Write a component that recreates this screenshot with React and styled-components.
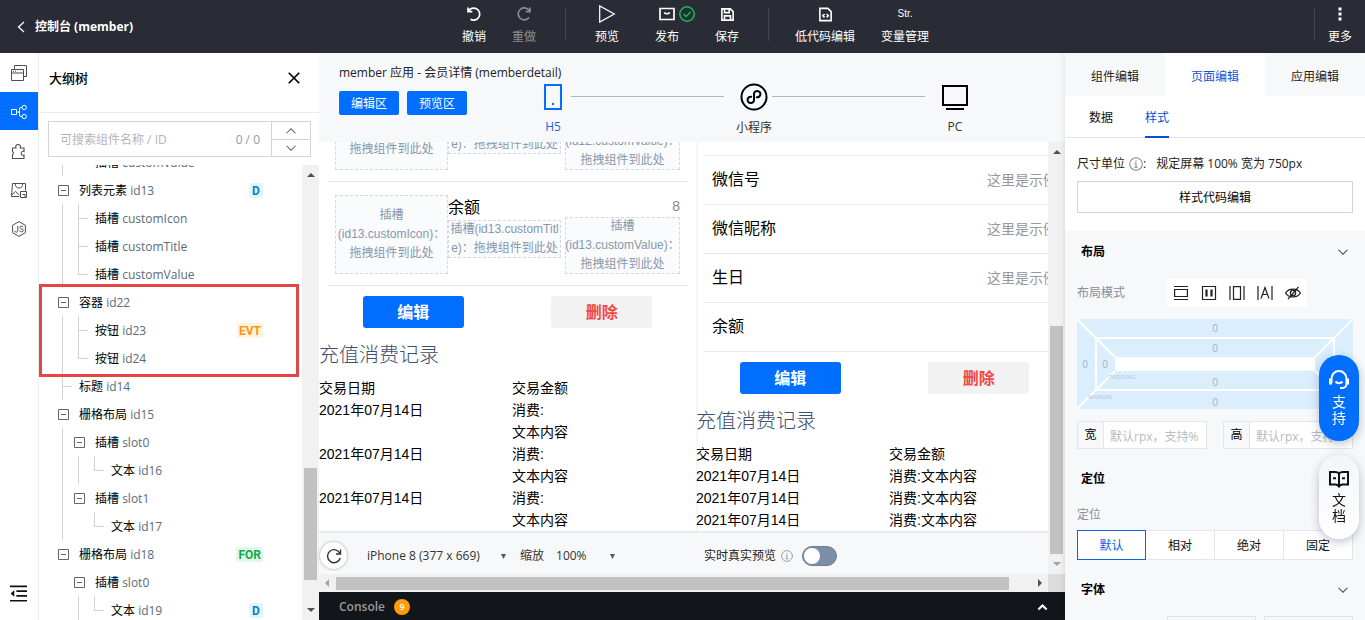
import React from "react";
import styled, { createGlobalStyle, css } from "styled-components";

const GlobalStyle = createGlobalStyle`
  * {
    box-sizing: border-box;
  }

  body {
    margin: 0;
    color: #000;
    font-family: "Open Sans", "Noto Sans CJK SC", sans-serif;
    font-size: 12px;
    line-height: 20px;
    overflow: hidden;
  }

  button, input, select {
    margin: 0;
    padding: 0;
    border: 0;
    border-radius: 0;
    background: none;
    color: inherit;
    font: inherit;
  }

  ul {
    margin: 0;
    padding: 0;
    list-style: none;
  }

  svg {
    display: block;
    flex: none;
  }
`;

const Page = styled.div`
  height: 100vh;
  display: flex;
  flex-direction: column;
`;

const Body = styled.div`
  flex: 1;
  min-height: 0;
  display: flex;
`;

/* ---------- top bar ---------- */

const TopBar = styled.header`
  flex: none;
  height: 53px;
  padding-left: 29px;
  display: grid;
  grid-template-columns: 1fr auto 1fr;
  background: #292c34;
  color: #fff;
`;

const BackLink = styled.a`
  display: flex;
  align-items: center;
  gap: 10px;
  margin-left: -12px;
  color: #fff;
  font-weight: 700;
  text-decoration: none;
`;

const Tools = styled.nav`
  display: flex;
`;

const ToolGroup = styled.div`
  display: flex;
  padding: 0 ${(p) => (p.$wide ? 0 : 5)}px;
`;

const Divider = styled.span`
  width: 1px;
  height: 33px;
  margin: 8px ${(p) => (p.$end ? 0 : 11)}px 0;
  background: #41454d;
`;

const Tool = styled.button`
  position: relative;
  width: ${(p) => p.$width}px;
  height: 47px;
  padding-top: 4px;
  display: flex;
  flex-direction: column;
  align-items: center;
  gap: 3px;
  color: #fff;
  opacity: ${(p) => (p.disabled ? 0.45 : 1)};
`;

const ToolIcon = styled.span`
  height: 20px;
  display: flex;
  align-items: center;
  font-family: "Liberation Sans", sans-serif;
  font-size: 10px;
`;

const Published = styled.svg`
  position: absolute;
  top: 6px;
  left: 42px;
`;

const TopEnd = styled.div`
  display: flex;
  justify-content: flex-end;
`;

/* ---------- icon rail ---------- */

const Rail = styled.nav`
  flex: none;
  width: 39px;
  padding-bottom: 8px;
  display: flex;
  flex-direction: column;
  gap: 1px;
  border-right: 1px solid #ebedf0;
  background: #fff;
`;

const RailButton = styled.button`
  width: 38px;
  height: 38px;
  padding: 1px 1px 0 0;
  display: grid;
  place-items: center;
  background: ${(p) => (p.$active ? "#006eff" : "#fff")};
  color: ${(p) => (p.$active ? "#fff" : "#4b4f55")};

  &:last-child {
    margin-top: auto;
    color: #111;
  }
`;

/* ---------- outline tree ---------- */

const Outline = styled.aside`
  flex: none;
  width: 280px;
  display: flex;
  flex-direction: column;
  background: #fff;
`;

const OutlineHead = styled.div`
  flex: none;
  height: 60px;
  padding: 0 18px 10px 10px;
  display: flex;
  align-items: center;
  justify-content: space-between;
  border-bottom: 1px solid #e8eaed;

  h2 {
    margin: 0;
    font-size: 13px;
    font-weight: 500;
  }
`;

const Search = styled.div`
  flex: none;
  height: 36px;
  margin: 8px 8px 8px 9px;
  display: flex;
  border: 1px solid #cfd5de;
  color: #999;
`;

const SearchInput = styled.input`
  flex: 1;
  min-width: 0;
  padding: 2px 0 0 11px;

  &::placeholder {
    color: #b5b5b5;
  }
`;

const Count = styled.span`
  padding: 8px 11px 0;
`;

const Stepper = styled.div`
  width: 39px;
  display: grid;
  grid-template-rows: 1fr 1fr;
  border-left: 1px solid #cfd5de;
  color: #4f5b66;

  button {
    display: grid;
    place-items: center;
  }

  button + button {
    border-top: 1px solid #cfd5de;
  }
`;

const TreeArea = styled.div`
  flex: 1;
  min-height: 0;
  display: flex;
`;

const TreeView = styled.div`
  flex: 1;
  overflow: hidden;

  > ul {
    margin-top: -17px;
  }
`;

const TreeGroup = styled.li`
  position: relative;

  ${(p) =>
    p.$marked &&
    css`
      z-index: 1;

      &::after {
        content: "";
        position: absolute;
        inset: -4px 3px -5px 0;
        border: 3px solid #e54545;
      }
    `}
`;

const TreeRow = styled.div`
  height: 28px;
  padding: 0 39px 0 15px;
  display: flex;
  align-items: center;
  white-space: nowrap;
`;

const Guide = styled.span`
  position: relative;
  flex: none;
  align-self: stretch;
  width: 16px;

  &::before {
    content: "";
    position: absolute;
    left: 8px;
    top: 0;
    height: ${(p) => (p.$kind === "last" ? "50%" : "100%")};
    border-left: ${(p) => (p.$kind === "gap" ? "0" : "1px solid #cfd3d8")};
  }

  &::after {
    content: "";
    position: absolute;
    left: 8px;
    top: 50%;
    width: 10px;
    border-top: ${(p) =>
      p.$kind === "last" || p.$kind === "leaf" ? "1px solid #cfd3d8" : "0"};
  }
`;

const Toggle = styled.button`
  width: 16px;
  height: 16px;
  padding: 1px 0 0 3px;
  display: grid;
  place-items: center;
  color: #666;
`;

const NodeName = styled.span`
  flex: 1;
  margin-left: 9px;
  padding-top: 2px;

  span {
    color: #5b6b78;
  }
`;

const tagColors = {
  D: ["#0a7fc2", "#e0f5fd"],
  EVT: ["#ff9416", "#fff3dc"],
  FOR: ["#14a94b", "#e3f8ea"],
};

const Tag = styled.span`
  min-width: 14px;
  padding: 1px 2px 0;
  border-radius: 2px;
  font-family: Roboto, sans-serif;
  font-weight: 700;
  line-height: 14px;
  text-align: center;
  color: ${(p) => tagColors[p.$type][0]};
  background: ${(p) => tagColors[p.$type][1]};
`;

/* ---------- scroll bars ---------- */

const ScrollTrack = styled.div`
  flex: none;
  display: flex;
  flex-direction: ${(p) => (p.$horizontal ? "row" : "column")};
  align-items: center;
  background: #f1f1f1;
  ${(p) => (p.$horizontal ? "height: 18px;" : "width: 17px;")}

  svg {
    margin: ${(p) => (p.$horizontal ? "0 4px" : "6px 0")};
  }
`;

const ScrollSpace = styled.span`
  flex: ${(p) => p.$share} 0 0;
`;

const ScrollThumb = styled.span`
  flex: ${(p) => p.$share} 0 0;
  ${(p) => (p.$horizontal ? "height: 13px;" : "width: 13px;")}
  background: #c1c1c1;
`;

/* ---------- workspace ---------- */

const Workspace = styled.main`
  flex: 1;
  min-width: 0;
  display: flex;
  flex-direction: column;
  background: #f7f8fa;
`;

const WorkHead = styled.div`
  flex: none;
  height: 89px;
  padding: 10px 92px 0 20px;
`;

const AppTitle = styled.div`
  color: #222;
`;

const WorkRow = styled.div`
  display: flex;
`;

const SmallButton = styled.button`
  width: 60px;
  height: 24px;
  margin: 8px 8px 0 0;
  padding-top: 2px;
  border-radius: 2px;
  background: #006eff;
  color: #fff;
`;

const Steps = styled.div`
  flex: 1;
  margin-left: 60px;
  display: flex;
`;

const Step = styled.button`
  width: 36px;
  height: 54px;
  display: flex;
  flex-direction: column;
  align-items: center;
  gap: 7px;
  white-space: nowrap;
  color: ${(p) => (p.$active ? "#1a66e0" : "#333")};
`;

const StepLine = styled.span`
  flex: 1;
  height: 1px;
  margin: 13px 12px 0 0;
  background: #b3b7bc;
`;

const Stage = styled.div`
  flex: 1;
  min-height: 0;
  display: flex;
`;

const StageMain = styled.div`
  flex: 1;
  min-width: 0;
  display: flex;
  flex-direction: column;
`;

const Phones = styled.div`
  flex: 1;
  min-height: 0;
  display: flex;
  overflow: hidden;
  background: #fff;
  font-family: "Liberation Sans", "Noto Sans CJK SC", sans-serif;
`;

const Phone = styled.section`
  flex: none;
  width: 377px;
  display: flex;
  flex-direction: column;
  justify-content: flex-end;

  & + & {
    box-shadow: inset 2px 0 #f5f6f8;
  }
`;

const SlotRow = styled.div`
  flex: none;
  height: 104px;
  margin: 0 8px 0 9px;
  padding: 13px 8px 11px 7px;
  display: grid;
  grid-template-columns: 113px 113px 115px;
  column-gap: 0;
  border-bottom: 1px solid #e8eaec;

  > :last-child {
    margin: 0 -4px 0 4px;
  }
`;

const SlotColumn = styled.div`
  display: flex;
  flex-direction: column;
`;

const Slot = styled.div`
  flex: ${(p) => (p.$fill ? 1 : "none")};
  display: grid;
  place-content: center;
  outline: 1px dashed #d3d9e2;
  outline-offset: -1px;
  background: #fafbfd;
  color: #8797ab;
  line-height: 19px;
  text-align: center;
  white-space: nowrap;
`;

const SlotTitle = styled.div`
  height: 25px;
  font-size: 16px;
  line-height: 25px;
`;

const SlotValue = styled.div`
  height: 22px;
  font-size: 14px;
  line-height: 22px;
  text-align: right;
  color: #888;
`;

const List = styled.ul`
  flex: none;
  margin-left: 8px;
  border-top: 1px solid #e8eaec;
`;

const ListItem = styled.li`
  height: 49px;
  padding: 0 16px 0 8px;
  display: flex;
  align-items: center;
  justify-content: space-between;
  border-bottom: 1px solid #e8eaec;
  font-size: 16px;

  span {
    font-size: 14px;
    color: #999;
  }
`;

const Actions = styled.div`
  flex: none;
  padding-top: 10px;
  display: flex;
  justify-content: space-around;
`;

const ActionButton = styled.button`
  width: 101px;
  height: 32px;
  padding-top: 2px;
  border-radius: 3px;
  font-size: 16px;
  font-weight: 700;
  background: ${(p) => (p.$danger ? "#f2f2f2" : "#006eff")};
  color: ${(p) => (p.$danger ? "#f04848" : "#fff")};
`;

const RecordTitle = styled.h3`
  flex: none;
  margin: 13px 0 8px;
  font-size: 20px;
  font-weight: 300;
  line-height: 28px;
  color: #3d506b;
`;

const Records = styled.table`
  flex: none;
  border-collapse: collapse;
  font-size: 14px;
  line-height: 22px;
  text-align: left;

  th,
  td {
    padding: 0;
    font-weight: 400;
    vertical-align: top;
  }

  th:first-child {
    width: 193px;
  }
`;

const DeviceBar = styled.div`
  flex: none;
  height: 43px;
  padding: 4px 0 0 1px;
  display: flex;
  align-items: center;
  border-top: 2px solid #e9ebee;
  color: #333;
`;

const Reload = styled.button`
  width: 27px;
  height: 27px;
  margin-right: 20px;
  display: grid;
  place-items: center;
  border-radius: 50%;
  background: #fff;
  box-shadow: 0 0 3px rgba(0, 0, 0, 0.35);
`;

const SelectBox = styled.span`
  width: ${(p) => p.$width}px;
  display: flex;
  align-items: center;

  select {
    flex: 1;
    min-width: 0;
    appearance: none;
    line-height: 20px;
  }
`;

const ZoomLabel = styled.label`
  margin: 0 12px 0 13px;
`;

const Live = styled.div`
  margin-left: 88px;
  display: flex;
  align-items: center;
  gap: 5px;
  color: #222;

  svg {
    color: #8a94a0;
  }
`;

const Switch = styled.input`
  appearance: none;
  width: 35px;
  height: 20px;
  margin-left: 4px;
  display: flex;
  border: 1px solid #6c7e96;
  border-radius: 10px;
  background: #7b8ea6;

  &::before {
    content: "";
    width: 16px;
    height: 16px;
    margin: 1px;
    border-radius: 50%;
    background: #fff;
  }
`;

const HScroll = styled.div`
  flex: none;
  display: flex;

  > div {
    flex: 1;
  }
`;

const Corner = styled.span`
  width: 17px;
  background: #dcdcdc;
`;

const Console = styled.div`
  flex: none;
  height: 28px;
  padding: 2px 17px 0 20px;
  display: flex;
  align-items: center;
  gap: 9px;
  background: #121519;
  color: #999;
  font-weight: 600;

  button {
    margin-left: auto;
    color: #fff;
  }
`;

const ConsoleCount = styled.span`
  width: 16px;
  height: 16px;
  border-radius: 50%;
  background: #ff9c0a;
  color: #fff;
  font-size: 9px;
  line-height: 16px;
  text-align: center;
`;

/* ---------- inspector ---------- */

const Inspector = styled.aside`
  position: relative;
  flex: none;
  width: 300px;
  display: flex;
  flex-direction: column;
  overflow: hidden;
  background: #f7f8fa;
  box-shadow: 0 0 6px rgba(0, 0, 0, 0.12);
`;

const MainTabs = styled.div`
  flex: none;
  display: grid;
  grid-template-columns: repeat(3, 1fr);
`;

const MainTab = styled.button`
  height: 43px;
  padding-top: 4px;
  background: ${(p) => (p.$active ? "#fff" : "#f7f8fa")};
  color: ${(p) => (p.$active ? "#1058d8" : "#222")};
`;

const SubTabs = styled.div`
  flex: none;
  height: 42px;
  padding-left: 24px;
  display: flex;
  gap: 32px;
  border-bottom: 1px solid #e4e6ea;
  background: #fff;
`;

const SubTab = styled.button`
  height: 42px;
  padding-top: 4px;
  border-bottom: 2px solid ${(p) => (p.$active ? "#0052d9" : "transparent")};
  color: ${(p) => (p.$active ? "#0052d9" : "#111")};
`;

const UnitBlock = styled.div`
  flex: none;
  padding: 16px 12px 18px;
  background: #fff;
  color: #222;
`;

const UnitLine = styled.div`
  margin-bottom: 7px;
  display: flex;
  align-items: center;

  svg {
    margin-left: 4px;
    color: #888;
  }

  span {
    margin-left: 10px;
  }
`;

const CodeButton = styled.button`
  width: 100%;
  height: 32px;
  padding-top: 2px;
  border: 1px solid #cfd5de;
  background: #fff;
  color: #000;
`;

const Section = styled.section`
  flex: none;
  padding: 0 12px 9px;
`;

const SectionHead = styled.div`
  height: 40px;
  padding: 2px 4px 0;
  display: flex;
  align-items: center;
  justify-content: space-between;
  font-weight: 700;

  svg {
    color: #333;
  }
`;

const ModeRow = styled.div`
  height: 28px;
  margin: 8px 0 12px;
  display: flex;
  align-items: center;
  color: #888f99;
`;

const Modes = styled.div`
  margin-left: 42px;
  display: flex;
  background: #fff;
  color: #222;

  button {
    width: 28px;
    height: 28px;
    display: grid;
    place-items: center;
  }
`;

const BoxModel = styled.svg`
  width: 100%;
  height: auto;
  font-size: 10px;
  text-anchor: middle;
`;

const SizeRow = styled.div`
  margin-top: 12px;
  display: grid;
  grid-template-columns: 1fr 1fr;
  gap: 16px;
`;

const SizeField = styled.label`
  min-width: 0;
  height: 28px;
  display: flex;
  align-items: center;
  border: 1px solid #e3e6eb;

  span {
    flex: none;
    width: 25px;
    text-align: center;
  }

  input {
    flex: 1;
    min-width: 0;
    height: 100%;
    padding: 2px 0 0 6px;
    border-left: 1px solid #e3e6eb;
    background: #fff;
  }

  input::placeholder {
    color: #b8bcc2;
  }
`;

const FieldLabel = styled.div`
  padding: 7px 0 5px;
  color: #888f99;
`;

const Positions = styled.div`
  display: grid;
  grid-template-columns: repeat(4, 1fr);
`;

const PositionButton = styled.button`
  height: 30px;
  padding-top: 2px;
  border: 1px solid ${(p) => (p.$active ? "#0f62e0" : "#e3e6eb")};
  border-left-width: ${(p) => (p.$active ? 1 : 0)}px;
  background: #fff;
  color: ${(p) => (p.$active ? "#0f62e0" : "#111")};
`;

const FontFields = styled.div`
  height: 28px;
  margin-top: 7px;
  padding-left: 90px;
  display: flex;
  gap: 8px;
`;

const FontField = styled.span`
  flex: 1;
  border: 1px solid #dfe3e8;
`;

/* ---------- floating buttons ---------- */

const Floating = styled.div`
  position: fixed;
  right: 6px;
  bottom: 81px;
  display: flex;
  flex-direction: column;
  gap: 14px;
`;

const FloatButton = styled.button`
  width: 40px;
  padding: 15px 0;
  display: flex;
  flex-direction: column;
  align-items: center;
  gap: 4px;
  border-radius: 20px;
  background: ${(p) =>
    p.$primary ? "#006eff" : "linear-gradient(#f4f5f7, #fff)"};
  color: ${(p) => (p.$primary ? "#fff" : "#111")};
  box-shadow: 0 3px 10px rgba(40, 60, 90, 0.3);
  font-size: 14px;
  line-height: 16px;

  span {
    width: 14px;
  }
`;

/* ---------- drawings ---------- */

const Icon = ({ size = 16, width = 1, children }) => (
  <svg
    width={size}
    height={size}
    viewBox="0 0 16 16"
    fill="none"
    stroke="currentColor"
    strokeWidth={width}
    aria-hidden="true"
  >
    {children}
  </svg>
);

const Chevron = ({ up, size = 12, width = 1.4 }) => (
  <Icon size={size} width={width}>
    <path d={up ? "M2 11l6-6 6 6" : "M2 5l6 6 6-6"} />
  </Icon>
);

const Arrow = ({ dir, faded, size = 8 }) => {
  const shapes = {
    up: "M0 6l4-4 4 4z",
    down: "M0 2l4 4 4-4z",
    left: "M6 0L2 4l4 4z",
    right: "M2 0l4 4-4 4z",
  };
  return (
    <svg width={size} height={size} viewBox="0 0 8 8" aria-hidden="true">
      <path d={shapes[dir]} fill={faded ? "#a3a3a3" : "#505050"} />
    </svg>
  );
};

const Caret = () => (
  <svg width="7" height="6" viewBox="0 0 7 6" aria-hidden="true">
    <path d="M1 1h5L3.500 6z" fill="#555" />
  </svg>
);

const Info = ({ size = 14 }) => (
  <Icon size={size} width={1.2}>
    <circle cx="8" cy="8" r="7.2" />
    <path d="M8 4v1.6M6.4 7.2H8v4.6M6.2 11.8h3.8" />
  </Icon>
);

const icons = {
  undo: (
    <Icon width={1.7}>
      <path d="M2 1.5v4.200h4.300M2.300 5.500A6 6 0 1 1 4.500 13.200" />
    </Icon>
  ),
  redo: (
    <Icon width={1.7}>
      <path d="M14 1.5v4.200H9.700M13.700 5.500A6 6 0 1 0 13 11.500" />
    </Icon>
  ),
  preview: (
    <Icon size={18} width={1.1}>
      <path d="M1.500 .8v14.400L14.500 8z" />
    </Icon>
  ),
  publish: (
    <Icon width={1.7}>
      <path d="M1 2.500h14v11H1zM5.300 6.300a2.900 2.300 0 0 0 5.400 0" />
    </Icon>
  ),
  save: (
    <Icon size={15} width={1.7}>
      <path d="M2 2h9l3 3v9H2zM4.800 2v4h5V2M4.800 14V9.500h6.400V14" />
    </Icon>
  ),
  code: (
    <Icon size={15} width={1.7}>
      <path d="M2 1.500h8.500L14 5v9.500H2zM7 7.500l-1.800 1.800L7 11.100M9.200 7.500L11 9.300l-1.800 1.800" />
    </Icon>
  ),
  more: (
    <svg width="4" height="14" viewBox="0 0 4 14" fill="#fff">
      <path d="M.5 .5h3v3h-3zM.5 5.500h3v3h-3zM.5 10.500h3v3h-3z" />
    </svg>
  ),
  pages: (
    <Icon>
      <path d="M.5 4.500h12v11H.5zM.5 8h12M2 6.300h1M4 6.300h1M3.500 4.500v-4h12v11h-3" />
    </Icon>
  ),
  tree: (
    <Icon>
      <path d="M.5 5.500h5v5h-5zM5.500 8h3M11 3.500H10A1.500 1.500 0 0 0 8.500 5v6a1.500 1.500 0 0 0 1.500 1.500h1" />
      <circle cx="13.200" cy="3.500" r="2.200" />
      <circle cx="13.200" cy="12.500" r="2.200" />
    </Icon>
  ),
  puzzle: (
    <Icon width={1.1}>
      <path d="M1.500 5H5a2.400 2.400 0 1 1 4.200 0H13v3.500a2 2 0 1 0 0 3.600v3.400H1.500v-3.800a1.900 1.900 0 0 0 0-3.200z" />
    </Icon>
  ),
  material: (
    <Icon>
      <path d="M14.500 8.500V1.500H1.500L.5 14.500H8M4.300 1.500a3.700 4.500 0 0 0 7.400 0M.8 13l3.700-3.500L8.500 13M9.500 9.500h6v6h-6zM11.500 12.500h2.500v3" />
    </Icon>
  ),
  js: (
    <Icon>
      <path d="M8 .6l6.400 3.700v7.400L8 15.400l-6.400-3.700V4.300zM6.800 5v4.600a1.500 1.500 0 0 1-3 .2M12.200 6.200C11.600 4.500 8.800 4.700 8.900 6.400c.1 1.900 3.400 1 3.400 2.900 0 2-3.200 2-3.600 .2" />
    </Icon>
  ),
  collapse: (
    <Icon size={17} width={1.6}>
      <path d="M0 1.200h16M6 5.800h10M6 10.200h10M0 14.800h16" />
      <path d="M4 5v6L.5 8z" fill="currentColor" stroke="none" />
    </Icon>
  ),
  phone: (
    <svg width="18" height="27" viewBox="0 0 18 27" fill="none">
      <path d="M1 2h16v24H1z" stroke="#006eff" strokeWidth="2" />
      <path d="M8 20h2v2H8z" fill="#006eff" />
    </svg>
  ),
  mini: (
    <svg width="28" height="28" viewBox="0 0 28 28" fill="none">
      <g stroke="#000" strokeWidth="2" strokeLinecap="round">
        <circle cx="14" cy="14" r="12.500" />
        <path d="M11.200 13.700a3.200 3.200 0 1 0 2.800 3.200v-5.800a3.200 3.200 0 1 1 2.800 3.200" />
      </g>
    </svg>
  ),
  pc: (
    <svg width="26" height="27" viewBox="0 0 26 27" fill="none">
      <path d="M1 3h24v19H1z" stroke="#000" strokeWidth="2" />
      <path d="M4 26h18" stroke="#000" strokeWidth="2" />
    </svg>
  ),
  block: (
    <Icon width={1.2}>
      <path d="M1 1.500h14M1 14.500h14M1.600 4.500h12.800v7H1.600z" />
    </Icon>
  ),
  flex: (
    <Icon width={1.2}>
      <path d="M1.500 1.500h13v13h-13z" />
      <path d="M5.500 4.500v7M10.500 4.500v7" strokeWidth="2.200" />
    </Icon>
  ),
  inlineBlock: (
    <Icon width={1.2}>
      <path d="M1 1v14M15 1v14M4.500 1.600h7v12.800h-7z" />
    </Icon>
  ),
  inline: (
    <Icon width={1.2}>
      <path d="M1 1v14M15 1v14M4 13.500L8 2.500l4 11M5.500 9.500h5" />
    </Icon>
  ),
  hidden: (
    <Icon width={1.3}>
      <path d="M.6 8C3.500 2.800 12.500 2.800 15.400 8 12.500 13.200 3.500 13.200 .6 8zM13.500 1.800L3 14.200" />
      <circle cx="8" cy="8" r="2.600" />
    </Icon>
  ),
  headset: (
    <svg width="20" height="20" viewBox="0 0 20 20" fill="none">
      <g stroke="currentColor" strokeWidth="2">
        <path d="M2.500 13V8.500a7.500 7.500 0 0 1 15 0V14a4 4 0 0 1-4 4H11" />
        <path d="M6.500 11.500c1.800 2.200 5.200 2.200 7 0" />
        <path d="M1.500 8.500v6M18.500 8.500v6" strokeWidth="3" />
      </g>
    </svg>
  ),
  book: (
    <svg width="20" height="18" viewBox="0 0 20 18" fill="none">
      <path
        d="M10 3.500C9 2 7.500 2 6 2H1v12.500h5.500c1.500 0 2.500 .5 3.500 2 1-1.500 2-2 3.500-2H19V2h-5c-1.500 0-3 0-4 1.500zM10 3.500v13M4 8.300h3M13 8.300h3"
        stroke="currentColor"
        strokeWidth="2"
      />
    </svg>
  ),
};

/* ---------- data ---------- */

const treeGroups = [
  {
    key: "before",
    rows: [{ name: "插槽", id: "customValue", guides: ["line", "last"] }],
  },
  {
    key: "id13",
    rows: [
      { name: "列表元素", id: "id13", guides: [], open: true, tag: "D" },
      { name: "插槽", id: "customIcon", guides: ["line", "leaf"] },
      { name: "插槽", id: "customTitle", guides: ["line", "leaf"] },
      { name: "插槽", id: "customValue", guides: ["line", "last"] },
    ],
  },
  {
    key: "id22",
    marked: true,
    rows: [
      { name: "容器", id: "id22", guides: [], open: true },
      { name: "按钮", id: "id23", guides: ["line", "leaf"], tag: "EVT" },
      { name: "按钮", id: "id24", guides: ["line", "last"] },
    ],
  },
  {
    key: "id14",
    rows: [{ name: "标题", id: "id14", guides: ["leaf"] }],
  },
  {
    key: "id15",
    rows: [
      { name: "栅格布局", id: "id15", guides: [], open: true },
      { name: "插槽", id: "slot0", guides: ["line"], open: true },
      { name: "文本", id: "id16", guides: ["line", "line", "last"] },
      { name: "插槽", id: "slot1", guides: ["line"], open: true },
      { name: "文本", id: "id17", guides: ["line", "gap", "last"] },
    ],
  },
  {
    key: "id18",
    rows: [
      { name: "栅格布局", id: "id18", guides: [], open: true, tag: "FOR" },
      { name: "插槽", id: "slot0", guides: ["gap"], open: true },
      { name: "文本", id: "id19", guides: ["gap", "line", "last"], tag: "D" },
    ],
  },
];

const listItems = [
  ["微信号", "这里是示例"],
  ["微信昵称", "这里是示例"],
  ["生日", "这里是示例"],
  ["余额", ""],
];

const margins = [
  [138, 13],
  [138, 33],
  [8, 49],
  [28, 49],
  [138, 67],
  [138, 87],
];

/* ---------- parts ---------- */

const ScrollBar = ({ horizontal, before, thumb, after, fadeStart, fadeEnd }) => (
  <ScrollTrack $horizontal={horizontal} aria-hidden="true">
    <Arrow dir={horizontal ? "left" : "up"} faded={fadeStart} />
    <ScrollSpace $share={before} />
    <ScrollThumb $share={thumb} $horizontal={horizontal} />
    <ScrollSpace $share={after} />
    <Arrow dir={horizontal ? "right" : "down"} faded={fadeEnd} />
  </ScrollTrack>
);

const ToolItem = ({ icon, label, width, disabled, children }) => (
  <Tool $width={width} disabled={disabled}>
    <ToolIcon>{icon}</ToolIcon>
    {label}
    {children}
  </Tool>
);

const Header = () => (
  <TopBar>
    <BackLink href="#">
      <svg width="8" height="12" viewBox="0 0 8 12" fill="none">
        <path d="M7 1L1.500 6 7 11" stroke="#fff" strokeWidth="1.300" />
      </svg>
      控制台 (member)
    </BackLink>
    <Tools>
      <ToolGroup>
        <ToolItem icon={icons.undo} label="撤销" width={50} />
        <ToolItem icon={icons.redo} label="重做" width={50} disabled />
      </ToolGroup>
      <Divider />
      <ToolGroup $wide>
        <ToolItem icon={icons.preview} label="预览" width={60} />
        <ToolItem icon={icons.publish} label="发布" width={60}>
          <Published width="16" height="16" viewBox="0 0 16 16" fill="none">
            <g stroke="#0abf5b" strokeWidth="1.500">
              <circle cx="8" cy="8" r="7.200" />
              <path d="M4.500 8l2.500 2.500L11.500 6" />
            </g>
          </Published>
        </ToolItem>
        <ToolItem icon={icons.save} label="保存" width={60} />
      </ToolGroup>
      <Divider />
      <ToolGroup>
        <ToolItem icon={icons.code} label="低代码编辑" width={80} />
        <ToolItem icon="Str." label="变量管理" width={80} />
      </ToolGroup>
    </Tools>
    <TopEnd>
      <Divider $end />
      <ToolItem icon={icons.more} label="更多" width={50} />
    </TopEnd>
  </TopBar>
);

const Tree = () => (
  <Outline>
    <OutlineHead>
      <h2>大纲树</h2>
      <button aria-label="关闭">
        <Icon size={14} width={2}>
          <path d="M2 2l12 12M14 2L2 14" />
        </Icon>
      </button>
    </OutlineHead>
    <Search>
      <SearchInput
        type="text"
        aria-label="可搜索组件名称 / ID"
        placeholder="可搜索组件名称 / ID"
      />
      <Count>0 / 0</Count>
      <Stepper>
        <button aria-label="上一个">
          <Chevron up size={12} />
        </button>
        <button aria-label="下一个">
          <Chevron size={12} />
        </button>
      </Stepper>
    </Search>
    <TreeArea>
      <TreeView>
        <ul>
          {treeGroups.map((group) => (
            <TreeGroup key={group.key} $marked={group.marked}>
              {group.rows.map((row) => (
                <TreeRow key={row.id}>
                  {row.guides.map((kind, i) => (
                    <Guide key={i} $kind={kind} />
                  ))}
                  {row.open && (
                    <Toggle aria-label={row.id}>
                      <svg width="11" height="11" viewBox="0 0 11 11" fill="none">
                        <path d="M.5 .5h10v10H.5zM3 5.500h5" stroke="currentColor" />
                      </svg>
                    </Toggle>
                  )}
                  <NodeName>
                    {row.name} <span>{row.id}</span>
                  </NodeName>
                  {row.tag && <Tag $type={row.tag}>{row.tag}</Tag>}
                </TreeRow>
              ))}
            </TreeGroup>
          ))}
        </ul>
      </TreeView>
      <ScrollBar before={283} thumb={112} after={20} />
    </TreeArea>
  </Outline>
);

const SlotCell = ({ id, title, value }) => (
  <SlotRow>
    <Slot $fill>
      插槽
      <br />({id}.customIcon)：
      <br />
      拖拽组件到此处
    </Slot>
    <SlotColumn>
      <SlotTitle>{title}</SlotTitle>
      <Slot>
        插槽({id}.customTitl
        <br />
        e)：拖拽组件到此处
      </Slot>
    </SlotColumn>
    <SlotColumn>
      <SlotValue>{value}</SlotValue>
      <Slot>
        插槽
        <br />({id}.customValue)：
        <br />
        拖拽组件到此处
      </Slot>
    </SlotColumn>
  </SlotRow>
);

const PhoneBottom = ({ stacked }) => (
  <>
    <Actions>
      <ActionButton>编辑</ActionButton>
      <ActionButton $danger>删除</ActionButton>
    </Actions>
    <RecordTitle>充值消费记录</RecordTitle>
    <Records>
      <thead>
        <tr>
          <th>交易日期</th>
          <th>交易金额</th>
        </tr>
      </thead>
      <tbody>
        {[1, 2, 3].map((n) => (
          <tr key={n}>
            <td>2021年07月14日</td>
            <td>
              消费:
              {stacked && <br />}
              文本内容
            </td>
          </tr>
        ))}
      </tbody>
    </Records>
  </>
);

const Center = () => (
  <Workspace>
    <WorkHead>
      <AppTitle>member 应用 - 会员详情 (memberdetail)</AppTitle>
      <WorkRow>
        <SmallButton>编辑区</SmallButton>
        <SmallButton>预览区</SmallButton>
        <Steps>
          <Step $active>
            {icons.phone}
            H5
          </Step>
          <StepLine />
          <Step>
            {icons.mini}
            小程序
          </Step>
          <StepLine />
          <Step>
            {icons.pc}
            PC
          </Step>
        </Steps>
      </WorkRow>
    </WorkHead>
    <Stage>
      <StageMain>
        <Phones>
          <Phone>
            <SlotCell id="id12" />
            <SlotCell id="id13" title="余额" value="8" />
            <PhoneBottom stacked />
          </Phone>
          <Phone>
            <List>
              {listItems.map(([label, value]) => (
                <ListItem key={label}>
                  {label}
                  <span>{value}</span>
                </ListItem>
              ))}
            </List>
            <PhoneBottom />
          </Phone>
        </Phones>
        <DeviceBar>
          <Reload aria-label="刷新">
            <Icon width={1.4}>
              <path d="M14.500 1.500v4.500H10M14 5.500A6.500 6.500 0 1 0 14.300 10" />
            </Icon>
          </Reload>
          <SelectBox $width={140}>
            <select aria-label="设备">
              <option>iPhone 8 (377 x 669)</option>
            </select>
            <Caret />
          </SelectBox>
          <ZoomLabel htmlFor="zoom">缩放</ZoomLabel>
          <SelectBox $width={60}>
            <select id="zoom">
              <option>100%</option>
            </select>
            <Caret />
          </SelectBox>
          <Live>
            <label htmlFor="live">实时真实预览</label>
            <Info size={12} />
            <Switch id="live" type="checkbox" role="switch" />
          </Live>
        </DeviceBar>
      </StageMain>
      <ScrollBar before={166} thumb={230} after={0} fadeEnd />
    </Stage>
    <HScroll>
      <ScrollBar horizontal before={1} thumb={672} after={23} fadeStart />
      <Corner />
    </HScroll>
    <Console>
      Console
      <ConsoleCount>9</ConsoleCount>
      <button aria-label="展开">
        <Chevron up size={11} width={3} />
      </button>
    </Console>
  </Workspace>
);

const RightPanel = () => (
  <Inspector>
    <MainTabs>
      <MainTab>组件编辑</MainTab>
      <MainTab $active>页面编辑</MainTab>
      <MainTab>应用编辑</MainTab>
    </MainTabs>
    <SubTabs>
      <SubTab>数据</SubTab>
      <SubTab $active>样式</SubTab>
    </SubTabs>
    <UnitBlock>
      <UnitLine>
        尺寸单位
        <Info />:<span>规定屏幕 100% 宽为 750px</span>
      </UnitLine>
      <CodeButton>样式代码编辑</CodeButton>
    </UnitBlock>
    <Section>
      <SectionHead>
        布局
        <Chevron />
      </SectionHead>
      <ModeRow>
        布局模式
        <Modes>
          <button aria-label="block">{icons.block}</button>
          <button aria-label="flex">{icons.flex}</button>
          <button aria-label="inline-block">{icons.inlineBlock}</button>
          <button aria-label="inline">{icons.inline}</button>
          <button aria-label="none">{icons.hidden}</button>
        </Modes>
      </ModeRow>
      <BoxModel viewBox="0 0 276 90">
        <path d="M0 0h276v90H0z" fill="#daeefd" />
        <path
          d="M0 0l38 38M276 0l-38 38M0 90l38-38M276 90l-38-38M19 19h238v52H19z"
          fill="none"
          stroke="#fff"
          strokeWidth="2"
        />
        <path d="M38 38h200v14H38z" fill="#fff" />
        {margins.map(([x, y]) => (
          <text key={x + "-" + y} x={x} y={y} fill="#a3b1bf">
            0
          </text>
        ))}
        <text x="45" y="60" fill="#b4c4d1" fontSize="6">
          PADDING
        </text>
        <text x="23" y="80" fill="#b4c4d1" fontSize="6">
          MARGIN
        </text>
      </BoxModel>
      <SizeRow>
        <SizeField>
          <span>宽</span>
          <input type="text" placeholder="默认rpx，支持%" />
        </SizeField>
        <SizeField>
          <span>高</span>
          <input type="text" placeholder="默认rpx，支持%" />
        </SizeField>
      </SizeRow>
    </Section>
    <Section>
      <SectionHead>定位</SectionHead>
      <FieldLabel>定位</FieldLabel>
      <Positions>
        <PositionButton $active>默认</PositionButton>
        <PositionButton>相对</PositionButton>
        <PositionButton>绝对</PositionButton>
        <PositionButton>固定</PositionButton>
      </Positions>
    </Section>
    <Section>
      <SectionHead>
        字体
        <Chevron />
      </SectionHead>
      <FontFields>
        <FontField />
        <FontField />
      </FontFields>
    </Section>
  </Inspector>
);

const App = () => {
  return (
    <Page>
      <GlobalStyle />
      <Header />
      <Body>
        <Rail>
          <RailButton aria-label="页面">{icons.pages}</RailButton>
          <RailButton aria-label="大纲树" $active>
            {icons.tree}
          </RailButton>
          <RailButton aria-label="组件">{icons.puzzle}</RailButton>
          <RailButton aria-label="素材">{icons.material}</RailButton>
          <RailButton aria-label="代码">{icons.js}</RailButton>
          <RailButton aria-label="收起">{icons.collapse}</RailButton>
        </Rail>
        <Tree />
        <Center />
        <RightPanel />
      </Body>
      <Floating>
        <FloatButton $primary>
          {icons.headset}
          <span>支持</span>
        </FloatButton>
        <FloatButton>
          {icons.book}
          <span>文档</span>
        </FloatButton>
      </Floating>
    </Page>
  );
};

export default App;
